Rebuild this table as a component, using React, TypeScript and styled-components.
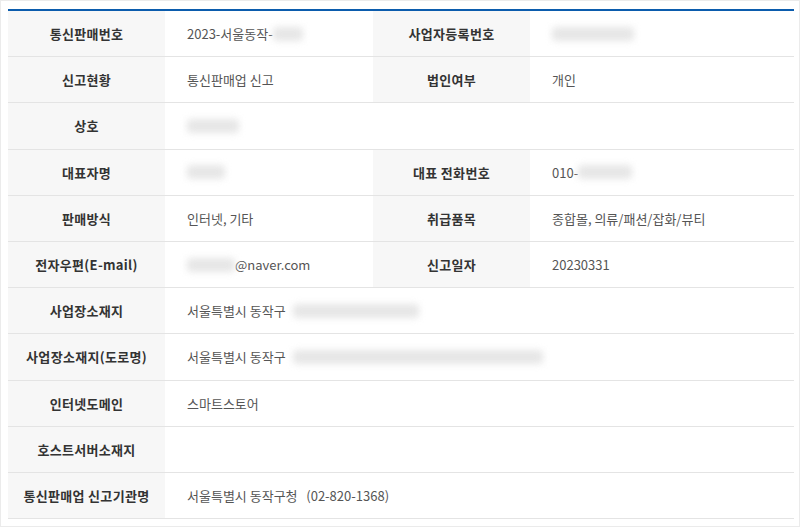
import React from "react";
import styled, { createGlobalStyle } from "styled-components";

const Global = createGlobalStyle`
  html, body { margin: 0; padding: 0; background: #fff; }
  * { box-sizing: border-box; }
`;

const Frame = styled.div`
  width: 800px;
  height: 527px;
  border: 1px solid #ebebeb;
  padding: 8px 5px 6px 7px;
  background: #fff;
  font-family: "Noto Sans CJK KR", "Noto Sans", sans-serif;
`;

const Table = styled.div`
  display: grid;
  grid-template-columns: 157px 208px 157px 1fr;
  border-top: 2px solid #0b5cad;
`;

const Head = styled.div`
  height: 46.2px;
  display: flex;
  align-items: center;
  justify-content: center;
  background: #f7f7f7;
  border-bottom: 1px solid #e4e4e4;
  font-size: 13px;
  font-weight: 700;
  color: #333;
  letter-spacing: 0.3px;
`;

const Value = styled.div<{ $span?: number }>`
  height: 46.2px;
  display: flex;
  align-items: center;
  padding-left: 22px;
  border-bottom: 1px solid #e4e4e4;
  font-size: 13px;
  color: #555;
  grid-column: span ${(p) => p.$span ?? 1};
  white-space: pre;
`;

const Blur = styled.span<{ $w: number; $gap?: number }>`
  display: inline-block;
  width: ${(p) => p.$w}px;
  height: 14px;
  margin-left: ${(p) => p.$gap ?? 0}px;
  background: #dedede;
  border-radius: 4px;
  filter: blur(3.5px);
  opacity: 0.75;
`;

const Sp = styled.span`
  display: inline-block;
`;

export default function App() {
  return (
    <>
      <Global />
      <Frame>
        <Table>
          <Head>통신판매번호</Head>
          <Value>
            <Sp>2023-서울동작-</Sp>
            <Blur $w={30} />
          </Value>
          <Head>사업자등록번호</Head>
          <Value>
            <Blur $w={82} />
          </Value>

          <Head>신고현황</Head>
          <Value>통신판매업 신고</Value>
          <Head>법인여부</Head>
          <Value>개인</Value>

          <Head>상호</Head>
          <Value $span={3}>
            <Blur $w={52} />
          </Value>

          <Head>대표자명</Head>
          <Value>
            <Blur $w={38} />
          </Value>
          <Head>대표 전화번호</Head>
          <Value>
            <Sp>010-</Sp>
            <Blur $w={54} />
          </Value>

          <Head>판매방식</Head>
          <Value>인터넷, 기타</Value>
          <Head>취급품목</Head>
          <Value>종합몰, 의류/패션/잡화/뷰티</Value>

          <Head>전자우편(E-mail)</Head>
          <Value>
            <Blur $w={48} />
            <Sp>@naver.com</Sp>
          </Value>
          <Head>신고일자</Head>
          <Value>20230331</Value>

          <Head>사업장소재지</Head>
          <Value $span={3}>
            <Sp>서울특별시 동작구 </Sp>
            <Blur $w={126} $gap={4} />
          </Value>

          <Head>사업장소재지(도로명)</Head>
          <Value $span={3}>
            <Sp>서울특별시 동작구 </Sp>
            <Blur $w={250} $gap={4} />
          </Value>

          <Head>인터넷도메인</Head>
          <Value $span={3}>스마트스토어</Value>

          <Head>호스트서버소재지</Head>
          <Value $span={3}></Value>

          <Head>통신판매업 신고기관명</Head>
          <Value $span={3}>서울특별시 동작구청   (02-820-1368)</Value>
        </Table>
      </Frame>
    </>
  );
}
